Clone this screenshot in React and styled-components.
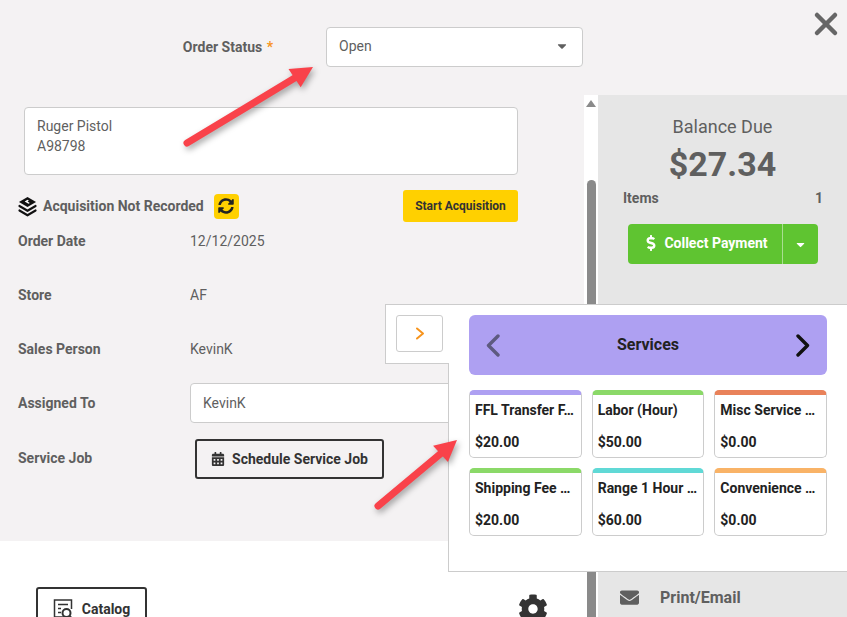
import styled, { createGlobalStyle } from 'styled-components';
import {
  FaCalendarAlt,
  FaCaretDown,
  FaCog,
  FaDollarSign,
  FaEnvelope,
  FaSyncAlt,
} from 'react-icons/fa';
import { FiX } from 'react-icons/fi';

const GlobalStyle = createGlobalStyle`
  html, body {
    margin: 0;
    padding: 0;
    background: #fff;
    font-family: Roboto, "Liberation Sans", sans-serif;
  }
  * { box-sizing: border-box; }
`;

const Page = styled.div`
  position: relative;
  width: 847px;
  height: 617px;
  overflow: hidden;
  display: flex;
  flex-direction: column;
  background: #fff;
  color: #5f5f5f;
  font-size: 14px;
`;

const Header = styled.div`
  height: 95px;
  flex: none;
  background: #f4f2f3;
  display: flex;
  align-items: flex-start;
  padding-top: 27px;
`;

const StatusLabel = styled.label`
  width: 273px;
  height: 40px;
  line-height: 40px;
  text-align: right;
  font-weight: 700;
  margin-right: 53px;
  span { color: #f7941d; margin-left: 1px; }
`;

const Select = styled.div`
  width: 257px;
  height: 40px;
  padding: 0 13px 2px 12px;
  display: flex;
  align-items: center;
  justify-content: space-between;
  background: #fff;
  border: 1px solid #ccc;
  border-radius: 4px;
  svg { color: #5f5f5f; }
`;

const CloseButton = styled.button`
  position: absolute;
  top: 6px;
  right: 3px;
  width: 36px;
  height: 36px;
  padding: 0;
  border: 0;
  background: none;
  color: #666;
  font-size: 36px;
  display: flex;
  align-items: center;
  justify-content: center;
`;

const Body = styled.div`
  flex: 1;
  display: flex;
  min-height: 0;
`;

const Left = styled.div`
  width: 584px;
  flex: none;
  display: flex;
  flex-direction: column;
`;

const Form = styled.div`
  height: 446px;
  flex: none;
  background: #f4f2f3;
  padding: 12px 66px 0 18px;
`;

const Description = styled.div`
  margin-left: 6px;
  width: 494px;
  height: 68px;
  padding: 8px 12px;
  background: #fff;
  border: 1px solid #ccc;
  border-radius: 4px;
  line-height: 20px;
`;

const AcquisitionRow = styled.div`
  margin-top: 15px;
  height: 32px;
  display: flex;
  align-items: center;
`;

const AcquisitionText = styled.span`
  margin-left: 6px;
  font-weight: 700;
`;

const RefreshButton = styled.button`
  margin-left: 10px;
  width: 25px;
  height: 25px;
  padding: 0;
  border: 0;
  border-radius: 4px;
  background: #ffd000;
  color: #222;
  font-size: 16px;
  display: flex;
  align-items: center;
  justify-content: center;
`;

const StartButton = styled.button`
  margin-left: auto;
  width: 115px;
  height: 32px;
  padding: 0;
  border: 0;
  border-radius: 3px;
  background: #ffd000;
  color: #333;
  font: 700 12px Roboto, sans-serif;
`;

const Rows = styled.div`
  margin-top: -8px;
`;

const Row = styled.div`
  height: ${(p) => p.$height || 54}px;
  display: flex;
  align-items: center;
`;

const RowLabel = styled.div`
  width: 172px;
  flex: none;
  font-weight: 700;
`;

const TextInput = styled.div`
  width: 300px;
  height: 40px;
  flex: none;
  padding-left: 12px;
  line-height: 38px;
  background: #fff;
  border: 1px solid #ccc;
  border-radius: 4px;
`;

const ScheduleButton = styled.button`
  margin: 2px 0 0 5px;
  width: 189px;
  height: 40px;
  padding: 0;
  background: #f4f2f3;
  border: 2px solid #333;
  border-radius: 3px;
  color: #333;
  font: 700 14px Roboto, sans-serif;
  display: flex;
  align-items: center;
  justify-content: center;
  gap: 7px;
  svg { font-size: 14px; }
`;

const Footer = styled.div`
  flex: 1;
  padding: 46px 36px 0 36px;
  display: flex;
  justify-content: space-between;
  align-items: flex-start;
`;

const CatalogButton = styled.button`
  width: 111px;
  height: 44px;
  padding: 0;
  background: #fff;
  border: 2px solid #333;
  border-radius: 3px;
  color: #333;
  font: 700 14px Roboto, sans-serif;
  display: flex;
  align-items: center;
  justify-content: center;
  gap: 9px;
`;

const GearIcon = styled(FaCog)`
  margin: 7px 0 0;
  font-size: 30px;
  color: #333;
`;

const Scrollbar = styled.div`
  width: 14px;
  flex: none;
  background: #fff;
  display: flex;
  flex-direction: column;
  align-items: center;
  padding-top: 5px;
`;

const ScrollUp = styled.div`
  width: 0;
  height: 0;
  border-left: 5px solid transparent;
  border-right: 5px solid transparent;
  border-bottom: 7px solid #8a8a8a;
`;

const ScrollThumb = styled.div`
  margin-top: 73px;
  width: 9px;
  flex: 1;
  background: #8a8a8a;
  border-radius: 5px 5px 0 0;
`;

const Side = styled.div`
  flex: 1;
  background: #e6e6e6;
  display: flex;
  flex-direction: column;
  align-items: center;
  padding-top: 21px;
`;

const BalanceTitle = styled.div`
  font-size: 18px;
  line-height: 22px;
`;

const BalanceValue = styled.div`
  font-size: 34px;
  font-weight: 700;
  line-height: 40px;
  margin-top: 6px;
`;

const ItemsRow = styled.div`
  align-self: stretch;
  margin: 4px 24px 0 25px;
  display: flex;
  justify-content: space-between;
  font-weight: 700;
  line-height: 20px;
`;

const PayButton = styled.div`
  margin-top: 16px;
  width: 190px;
  height: 40px;
  background: #5fc431;
  border-radius: 4px;
  color: #fff;
  font-weight: 700;
  display: flex;
  align-items: center;
`;

const PayMain = styled.div`
  width: 155px;
  height: 100%;
  padding: 0 0 2px 2px;
  border-right: 1px solid #a9de92;
  display: flex;
  align-items: center;
  justify-content: center;
  gap: 5px;
  svg { font-size: 16px; }
`;

const PayCaret = styled.div`
  flex: 1;
  display: flex;
  align-items: center;
  justify-content: center;
  font-size: 13px;
`;

const PrintRow = styled.div`
  margin-top: auto;
  align-self: stretch;
  height: 40px;
  padding-left: 22px;
  display: flex;
  align-items: center;
  gap: 21px;
  font-size: 16px;
  font-weight: 700;
  svg { font-size: 19px; }
`;

const Popover = styled.div`
  position: absolute;
  left: 385px;
  right: 0;
  top: 304px;
  display: flex;
  align-items: flex-start;
`;

const Tab = styled.div`
  width: 64px;
  height: 60px;
  margin-right: -1px;
  position: relative;
  z-index: 1;
  background: #fff;
  border: 1px solid #ccc;
  border-right: 0;
  padding: 10px 0 0 10px;
`;

const TabButton = styled.div`
  width: 47px;
  height: 37px;
  border: 1px solid #ccc;
  border-radius: 3px;
  color: #f7941d;
  display: flex;
  align-items: center;
  justify-content: center;
`;

const Panel = styled.div`
  flex: 1;
  height: 268px;
  background: #fff;
  border: 1px solid #ccc;
  border-right: 0;
  padding: 10px 20px 0 20px;
`;

const PanelHeader = styled.div`
  height: 60px;
  padding: 0 17px 2px;
  border-radius: 6px;
  background: #aea0f2;
  color: #222;
  font-size: 16px;
  font-weight: 700;
  display: flex;
  align-items: center;
  justify-content: space-between;
`;

const NavIcon = styled.svg`
  color: ${(p) => (p.$disabled ? '#5e5a80' : '#111')};
  margin-top: 2px;
`;

const CardGrid = styled.div`
  margin-top: 15px;
  display: grid;
  grid-template-columns: repeat(3, 1fr);
  grid-auto-rows: 68px;
  gap: 10px;
`;

const Card = styled.div`
  min-width: 0;
  padding: 0 5px;
  background: #fff;
  border: 1px solid #ccc;
  border-top: 5px solid ${(p) => p.$color};
  border-radius: 5px;
  color: #222;
  font-weight: 700;
`;

const CardTitle = styled.div`
  margin-top: 6px;
  line-height: 18px;
  white-space: nowrap;
`;

const CardPrice = styled.div`
  margin-top: 14px;
  line-height: 18px;
`;

const ArrowSvg = styled.svg`
  position: absolute;
  left: 0;
  top: 0;
  pointer-events: none;
  filter: drop-shadow(2px 3px 3px rgba(0, 0, 0, 0.35));
`;

const StackIcon = () => (
  <svg width="19" height="21" viewBox="0 0 20 21" preserveAspectRatio="none">
    <path d="M10 1L19 6L10 11L1 6Z" fill="#111" />
    <path d="M7 5.5L10 3.8L11.5 4.7L10 5.6L12.5 7L11 7.8Z" fill="#fff" />
    <path d="M1.5 10L10 14.8L18.5 10M1.5 14.5L10 19.3L18.5 14.5" fill="none" stroke="#111" strokeWidth="2.2" strokeLinecap="round" strokeLinejoin="round" />
  </svg>
);

const CatalogIcon = () => (
  <svg width="20" height="20" viewBox="0 0 20 20" fill="none" stroke="#333" strokeWidth="1.5">
    <path d="M11 18H1.5V1h17v9" />
    <path d="M5 5.5h10M5 9.5h3M5 13.5h3" />
    <circle cx="13.5" cy="14" r="4" strokeWidth="2" />
    <path d="M16.5 17l2.5 2.5" strokeWidth="2" />
  </svg>
);

const ChevronLeft = (props) => (
  <NavIcon width="14" height="23" viewBox="0 0 14 23" fill="none" stroke="currentColor" strokeWidth="3.4" strokeLinecap="round" strokeLinejoin="round" {...props}>
    <path d="M12 2L2.5 11.5L12 21" />
  </NavIcon>
);

const ChevronRight = (props) => (
  <NavIcon width="14" height="23" viewBox="0 0 14 23" fill="none" stroke="currentColor" strokeWidth="3.4" strokeLinecap="round" strokeLinejoin="round" {...props}>
    <path d="M2 2L11.5 11.5L2 21" />
  </NavIcon>
);

const TabChevron = () => (
  <svg width="10" height="13" viewBox="0 0 10 13" fill="none" stroke="currentColor" strokeWidth="2" strokeLinecap="round" strokeLinejoin="round">
    <path d="M2 1.5L8 6.5L2 11.5" />
  </svg>
);

const Arrow = ({ x1, y1, x2, y2 }) => {
  const deg = (Math.atan2(y2 - y1, x2 - x1) * 180) / Math.PI;
  const len = Math.hypot(x2 - x1, y2 - y1);
  return (
    <g transform={`translate(${x1} ${y1}) rotate(${deg})`}>
      <line x1="0" y1="0" x2={len - 18} y2="0" stroke="#f9424a" strokeWidth="7" strokeLinecap="round" />
      <path d={`M${len} 0 L${len - 22} -11 L${len - 21} 11 Z`} fill="#f9424a" />
    </g>
  );
};

// the reference shows these names already cut short
const services = [
  { name: 'FFL Transfer F…', price: '$20.00', color: '#aea0f2' },
  { name: 'Labor (Hour)', price: '$50.00', color: '#8bd968' },
  { name: 'Misc Service …', price: '$0.00', color: '#e9825a' },
  { name: 'Shipping Fee …', price: '$20.00', color: '#8bd968' },
  { name: 'Range 1 Hour …', price: '$60.00', color: '#60d9d6' },
  { name: 'Convenience …', price: '$0.00', color: '#f9b367' },
];

const rows = [
  { label: 'Order Date', value: '12/12/2025' },
  { label: 'Store', value: 'AF' },
  { label: 'Sales Person', value: 'KevinK' },
];

export default function App() {
  return (
    <Page>
      <GlobalStyle />
      <Header>
        <StatusLabel>
          Order Status <span>*</span>
        </StatusLabel>
        <Select>
          Open
          <FaCaretDown size={14} />
        </Select>
      </Header>
      <CloseButton aria-label="Close">
        <FiX strokeWidth={3} />
      </CloseButton>
      <Body>
        <Left>
          <Form>
            <Description>
              Ruger Pistol
              <br />
              A98798
            </Description>
            <AcquisitionRow>
              <StackIcon />
              <AcquisitionText>Acquisition Not Recorded</AcquisitionText>
              <RefreshButton aria-label="Refresh">
                <FaSyncAlt />
              </RefreshButton>
              <StartButton>Start Acquisition</StartButton>
            </AcquisitionRow>
            <Rows>
              {rows.map((r) => (
                <Row key={r.label}>
                  <RowLabel>{r.label}</RowLabel>
                  {r.value}
                </Row>
              ))}
              <Row>
                <RowLabel>Assigned To</RowLabel>
                <TextInput>KevinK</TextInput>
              </Row>
              <Row $height={56}>
                <RowLabel>Service Job</RowLabel>
                <ScheduleButton>
                  <FaCalendarAlt />
                  Schedule Service Job
                </ScheduleButton>
              </Row>
            </Rows>
          </Form>
          <Footer>
            <CatalogButton>
              <CatalogIcon />
              Catalog
            </CatalogButton>
            <GearIcon />
          </Footer>
        </Left>
        <Scrollbar>
          <ScrollUp />
          <ScrollThumb />
        </Scrollbar>
        <Side>
          <BalanceTitle>Balance Due</BalanceTitle>
          <BalanceValue>$27.34</BalanceValue>
          <ItemsRow>
            <span>Items</span>
            <span>1</span>
          </ItemsRow>
          <PayButton>
            <PayMain>
              <FaDollarSign />
              Collect Payment
            </PayMain>
            <PayCaret>
              <FaCaretDown />
            </PayCaret>
          </PayButton>
          <PrintRow>
            <FaEnvelope />
            Print/Email
          </PrintRow>
        </Side>
      </Body>
      <Popover>
        <Tab>
          <TabButton>
            <TabChevron />
          </TabButton>
        </Tab>
        <Panel>
          <PanelHeader>
            <ChevronLeft $disabled />
            Services
            <ChevronRight />
          </PanelHeader>
          <CardGrid>
            {services.map((s) => (
              <Card key={s.name} $color={s.color}>
                <CardTitle>{s.name}</CardTitle>
                <CardPrice>{s.price}</CardPrice>
              </Card>
            ))}
          </CardGrid>
        </Panel>
      </Popover>
      <ArrowSvg width="847" height="617">
        <Arrow x1={187} y1={143} x2={313} y2={67} />
        <Arrow x1={378} y1={506} x2={457} y2={440} />
      </ArrowSvg>
    </Page>
  );
}
